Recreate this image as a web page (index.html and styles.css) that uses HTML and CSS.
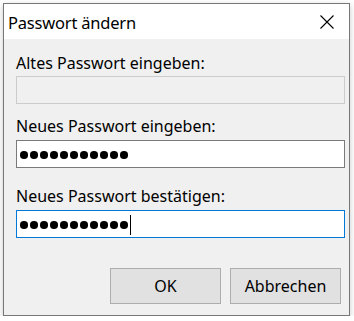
FILE: index.html
```html
<!DOCTYPE html>
<html lang="de">
<head>
<meta charset="utf-8">
<link rel="stylesheet" href="styles.css">
</head>
<body>
<div class="window">
  <div class="titlebar">
    <span class="title">Passwort ändern</span>
    <svg class="close" width="14" height="14" viewBox="0 0 14 14"><path d="M0.5 0.5 L13.5 13.5 M13.5 0.5 L0.5 13.5" stroke="#000" stroke-width="1.1" fill="none"/></svg>
  </div>
  <div class="content">
    <div class="label l1">Altes Passwort eingeben:</div>
    <div class="field disabled"></div>
    <div class="label l2">Neues Passwort eingeben:</div>
    <div class="field"><span class="dots"><i></i><i></i><i></i><i></i><i></i><i></i><i></i><i></i><i></i><i></i><i></i></span></div>
    <div class="label l3">Neues Passwort bestätigen:</div>
    <div class="field focus"><span class="dots"><i></i><i></i><i></i><i></i><i></i><i></i><i></i><i></i><i></i><i></i><i></i></span><span class="caret"></span></div>
    <div class="buttons">
      <div class="btn">OK</div>
      <div class="btn">Abbrechen</div>
    </div>
  </div>
</div>
</body>
</html>
```
FILE: styles.css
```css
html, body { margin: 0; padding: 0; background: #fff; }
body { font-family: "Noto Sans", "Liberation Sans", sans-serif; color: #000; }
.window {
  margin: 3px 0 0 3px;
  width: 345px;
  height: 311px;
  border: 1px solid #777;
  box-shadow: 0 2px 6px rgba(0,0,0,0.22);
  display: flex;
  flex-direction: column;
}
.titlebar {
  height: 35px;
  background: #fff;
  display: flex;
  align-items: center;
  justify-content: space-between;
  padding: 0 15px 0 4px;
}
.title { font-size: 16.5px; line-height: 20px; margin-top: 2px; letter-spacing: -0.2px; }
.close { display: block; margin-top: 0; }
.content {
  flex: 1;
  background: #f0f0f0;
  padding: 14px 0 0 12px;
  display: flex;
  flex-direction: column;
}
.label { font-size: 16px; line-height: 20px; height: 20px; }
.l2 { margin-top: 12px; }
.l3 { margin-top: 18px; }
.field {
  margin-top: 3px;
  width: 324px;
  height: 26px;
  border: 1px solid #7a7a7a;
  background: #fff;
  display: flex;
  align-items: center;
  padding-left: 3px;
  box-sizing: content-box;
}
.field.disabled { background: #f0f0f0; border-color: #cccccc; }
.l2 + .field, .l3 + .field { margin-top: 4px; }
.field.focus { border-color: #0078d7; }
.dots { display: flex; gap: 2.5px; margin-top: 2px; }
.dots i { display: block; width: 7.5px; height: 7.5px; border-radius: 50%; background: #000; }
.caret { width: 1px; height: 20px; background: #000; margin-left: 2px; margin-top: 1px; }
.buttons {
  margin-top: 30px;
  display: flex;
  justify-content: flex-end;
  gap: 9px;
  padding-right: 8px;
}
.btn {
  width: 109px;
  height: 34px;
  border: 1px solid #adadad;
  background: #e1e1e1;
  font-size: 16px;
  display: flex;
  align-items: center;
  justify-content: center;
}
```
